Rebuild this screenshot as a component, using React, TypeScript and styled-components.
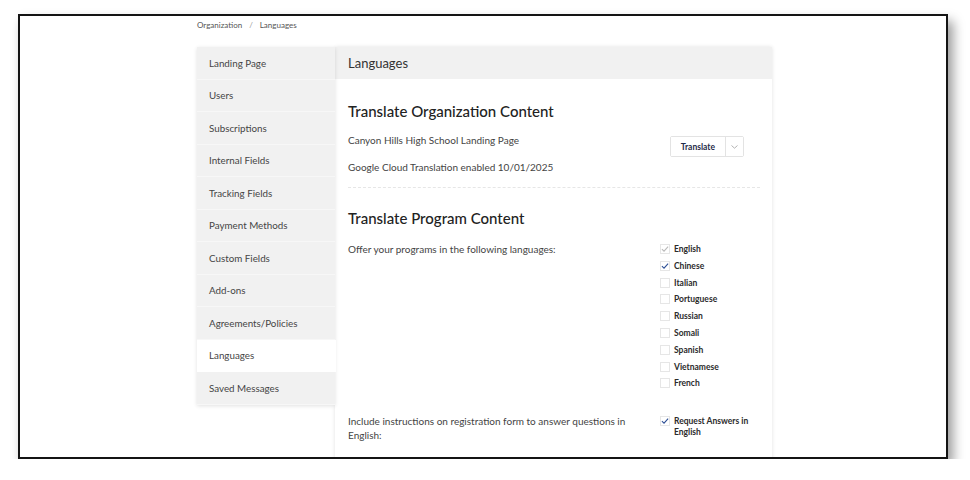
import styled, { createGlobalStyle } from 'styled-components';

const GlobalStyle = createGlobalStyle`
  html, body {
    margin: 0;
    padding: 0;
    background: #ffffff;
  }
  body {
    font-family: Lato, "Liberation Sans", sans-serif;
    color: #333;
  }
`;

const Frame = styled.div`
  box-sizing: border-box;
  margin: 14px 0 0 18px;
  width: 930px;
  height: 445px;
  border: 2px solid #141414;
  background: #ffffff;
  box-shadow: 5px 7px 11px rgba(0, 0, 0, 0.4);
  overflow: hidden;
`;

const Page = styled.div`
  width: 575px;
  margin-left: 177px;
`;

const Breadcrumb = styled.div`
  display: flex;
  gap: 7px;
  padding-top: 3px;
  height: 31px;
  box-sizing: border-box;
  font-size: 8px;
  line-height: 12px;
  color: #555;

  span.sep {
    color: #999;
  }
`;

const Layout = styled.div`
  display: flex;
  align-items: flex-start;
`;

const Sidebar = styled.nav`
  width: 138px;
  background: #f1f1f1;
  box-shadow: 0 1px 4px rgba(0, 0, 0, 0.12);
  position: relative;
  z-index: 1;
`;

const NavItem = styled.div<{ $active?: boolean }>`
  height: 32.5px;
  display: flex;
  align-items: center;
  padding-left: 12px;
  font-size: 9.8px;
  color: #454545;
  background: ${({ $active }) => ($active ? '#ffffff' : 'transparent')};
  border-bottom: 1px solid ${({ $active }) => ($active ? '#ffffff' : '#f7f7f7')};
  box-sizing: border-box;
  margin-right: ${({ $active }) => ($active ? '-1px' : '0')};
`;

const Panel = styled.section`
  flex: 1;
  background: #ffffff;
  box-shadow: 0 0 4px rgba(0, 0, 0, 0.12);
  min-height: 420px;
`;

const PanelHeader = styled.div`
  height: 32px;
  display: flex;
  align-items: center;
  padding-left: 13px;
  background: #f1f1f1;
  font-size: 13px;
  color: #333;
`;

const PanelBody = styled.div`
  padding: 22px 12px 0 13px;
`;

const SectionTitle = styled.h2`
  margin: 0;
  font-size: 15px;
  font-weight: 500;
  color: #222;
  line-height: 20px;
`;

const OrgRow = styled.div`
  display: flex;
  justify-content: space-between;
  align-items: flex-start;
  padding: 13px 16px 13px 0;
  border-bottom: 1px dashed #e6e6e6;
`;

const TextLines = styled.div`
  display: flex;
  flex-direction: column;
  gap: 14px;
`;

const Text = styled.p`
  margin: 0;
  font-size: 10px;
  line-height: 13px;
  color: #444;
`;

const SplitButton = styled.div`
  display: flex;
  height: 21px;
  border: 1px solid #e3e3e3;
  border-radius: 2px;
  box-sizing: border-box;
  margin-top: 2px;
`;

const ButtonMain = styled.button`
  border: none;
  background: #fff;
  font-family: inherit;
  font-size: 8.5px;
  font-weight: 700;
  color: #1f2b48;
  padding: 0 10px;
  border-right: 1px solid #e3e3e3;
`;

const ButtonCaret = styled.button`
  border: none;
  background: #fff;
  width: 17px;
  display: flex;
  align-items: center;
  justify-content: center;
  padding: 0;
`;

const ProgramSection = styled.div`
  padding-top: 20px;
`;

const OptionRow = styled.div<{ $top: number }>`
  display: flex;
  justify-content: space-between;
  align-items: flex-start;
  margin-top: ${({ $top }) => $top}px;
`;

const RowLabel = styled(Text)`
  width: 280px;
  line-height: 14px;
`;

const CheckList = styled.div`
  width: 100px;
  display: flex;
  flex-direction: column;
  gap: 5.8px;
  padding-top: 2px;
`;

const CheckItem = styled.label`
  display: flex;
  align-items: flex-start;
  gap: 4px;
  font-size: 8.5px;
  font-weight: 700;
  color: #2b2b2b;
  line-height: 11px;
`;

const Box = styled.span`
  width: 10px;
  height: 10px;
  flex: none;
  border: 1px solid #e6e6e6;
  box-sizing: border-box;
  display: flex;
  align-items: center;
  justify-content: center;
  background: #fff;
`;

type Check = 'off' | 'on' | 'locked';

function CheckBox({ state }: { state: Check }) {
  return (
    <Box>
      {state !== 'off' && (
        <svg width="9" height="8" viewBox="0 0 9 8">
          <path
            d="M1 4.2 L3.4 6.5 L8 1.3"
            fill="none"
            stroke={state === 'on' ? '#2d4f95' : '#b9b9b9'}
            strokeWidth="1.2"
          />
        </svg>
      )}
    </Box>
  );
}

const navItems = [
  'Landing Page',
  'Users',
  'Subscriptions',
  'Internal Fields',
  'Tracking Fields',
  'Payment Methods',
  'Custom Fields',
  'Add-ons',
  'Agreements/Policies',
  'Languages',
  'Saved Messages',
];

const languages: { name: string; state: Check }[] = [
  { name: 'English', state: 'locked' },
  { name: 'Chinese', state: 'on' },
  { name: 'Italian', state: 'off' },
  { name: 'Portuguese', state: 'off' },
  { name: 'Russian', state: 'off' },
  { name: 'Somali', state: 'off' },
  { name: 'Spanish', state: 'off' },
  { name: 'Vietnamese', state: 'off' },
  { name: 'French', state: 'off' },
];

export default function App() {
  return (
    <>
      <GlobalStyle />
      <Frame>
        <Page>
          <Breadcrumb>
            <span>Organization</span>
            <span className="sep">/</span>
            <span>Languages</span>
          </Breadcrumb>
          <Layout>
            <Sidebar>
              {navItems.map((item) => (
                <NavItem key={item} $active={item === 'Languages'}>
                  {item}
                </NavItem>
              ))}
            </Sidebar>
            <Panel>
              <PanelHeader>Languages</PanelHeader>
              <PanelBody>
                <SectionTitle>Translate Organization Content</SectionTitle>
                <OrgRow>
                  <TextLines>
                    <Text>Canyon Hills High School Landing Page</Text>
                    <Text>Google Cloud Translation enabled 10/01/2025</Text>
                  </TextLines>
                  <SplitButton>
                    <ButtonMain>Translate</ButtonMain>
                    <ButtonCaret>
                      <svg width="7" height="4" viewBox="0 0 7 4">
                        <path d="M0.5 0.5 L3.5 3.2 L6.5 0.5" fill="none" stroke="#aaa" strokeWidth="0.9" />
                      </svg>
                    </ButtonCaret>
                  </SplitButton>
                </OrgRow>
                <ProgramSection>
                  <SectionTitle>Translate Program Content</SectionTitle>
                  <OptionRow $top={14}>
                    <RowLabel>Offer your programs in the following languages:</RowLabel>
                    <CheckList>
                      {languages.map((lang) => (
                        <CheckItem key={lang.name}>
                          <CheckBox state={lang.state} />
                          {lang.name}
                        </CheckItem>
                      ))}
                    </CheckList>
                  </OptionRow>
                  <OptionRow $top={25}>
                    <RowLabel>
                      Include instructions on registration form to answer questions in English:
                    </RowLabel>
                    <CheckList>
                      <CheckItem>
                        <CheckBox state="on" />
                        Request Answers in English
                      </CheckItem>
                    </CheckList>
                  </OptionRow>
                </ProgramSection>
              </PanelBody>
            </Panel>
          </Layout>
        </Page>
      </Frame>
    </>
  );
}
